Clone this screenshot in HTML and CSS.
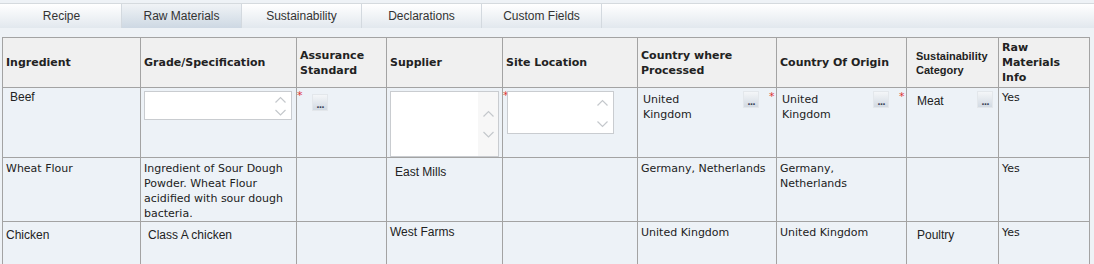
FILE: index.html
```html
<!DOCTYPE html>
<html lang="en">
<head>
  <meta charset="UTF-8">
  <title>Raw Materials</title>
  <link rel="stylesheet" href="styles.css">
</head>
<body>

<div class="tabbar">
  <a class="tab">Recipe</a>
  <a class="tab active">Raw Materials</a>
  <a class="tab">Sustainability</a>
  <a class="tab">Declarations</a>
  <a class="tab">Custom Fields</a>
</div>

<table class="grid">
  <colgroup>
    <col style="width:138px">
    <col style="width:156px">
    <col style="width:90px">
    <col style="width:116px">
    <col style="width:135px">
    <col style="width:139px">
    <col style="width:130px">
    <col style="width:92px">
    <col style="width:91px">
  </colgroup>
  <thead>
    <tr class="head">
      <th>Ingredient</th>
      <th>Grade/Specification</th>
      <th>Assurance Standard</th>
      <th>Supplier</th>
      <th>Site Location</th>
      <th>Country where Processed</th>
      <th>Country Of Origin</th>
      <th class="small">Sustainability Category</th>
      <th>Raw Materials Info</th>
    </tr>
  </thead>
  <tbody>
    <tr class="r1">
      <td><span class="arial pad">Beef</span></td>
      <td>
        <div class="box grade">
          <span class="chev">
            <svg width="11" height="24" viewBox="0 0 11 24"><path d="M0.5 8.5 L5.5 3.5 L10.5 8.5 M0.5 16 L5.5 21 L10.5 16" fill="none" stroke="#c4c8cc" stroke-width="1.2"/></svg>
          </span>
        </div>
      </td>
      <td class="flush">
        <div class="line"><span class="req">*</span><span class="pick first">...</span></div>
      </td>
      <td>
        <div class="box supplier">
          <span class="chev">
            <svg width="11" height="34" viewBox="0 0 11 34"><path d="M0.5 9.5 L5.5 4.5 L10.5 9.5 M0.5 25 L5.5 30 L10.5 25" fill="none" stroke="#c4c8cc" stroke-width="1.2"/></svg>
          </span>
        </div>
      </td>
      <td class="flush">
        <div class="line"><span class="req">*</span>
          <div class="box site">
            <span class="chev">
              <svg width="11" height="30" viewBox="0 0 11 30"><path d="M0.5 7.5 L5.5 2.5 L10.5 7.5 M0.5 23.5 L5.5 28.5 L10.5 23.5" fill="none" stroke="#c4c8cc" stroke-width="1.2"/></svg>
            </span>
          </div>
        </div>
      </td>
      <td>
        <div class="line">
          <span class="val">United Kingdom</span>
          <span class="pick">...</span>
          <span class="req end">*</span>
        </div>
      </td>
      <td>
        <div class="line">
          <span class="val">United Kingdom</span>
          <span class="pick">...</span>
          <span class="req end">*</span>
        </div>
      </td>
      <td>
        <div class="line">
          <span class="arial meat">Meat</span>
          <span class="pick">...</span>
        </div>
      </td>
      <td>Yes</td>
    </tr>
    <tr class="r2">
      <td>Wheat Flour</td>
      <td>Ingredient of Sour Dough Powder. Wheat Flour acidified with sour dough bacteria.</td>
      <td></td>
      <td><span class="arial mills">East Mills</span></td>
      <td></td>
      <td>Germany, Netherlands</td>
      <td>Germany, Netherlands</td>
      <td></td>
      <td>Yes</td>
    </tr>
    <tr class="r3">
      <td><span class="arial drop">Chicken</span></td>
      <td><span class="arial drop pad">Class A chicken</span></td>
      <td></td>
      <td><span class="arial">West Farms</span></td>
      <td></td>
      <td>United Kingdom</td>
      <td>United Kingdom</td>
      <td><span class="arial drop poultry">Poultry</span></td>
      <td>Yes</td>
    </tr>
  </tbody>
</table>

</body>
</html>
```

FILE: styles.css
```css
body {
  margin: 0;
  background: #eef2f6;
  font-family: "DejaVu Sans", Verdana, sans-serif;
  font-size: 11px;
  color: #222;
}
.tabbar {
  display: flex;
  margin-top: 3px;
  height: 24px;
  padding-left: 2px;
  border-top: 1px solid #d5dade;
  background: linear-gradient(#ffffff, #e2e8ee);
}
.tab {
  width: 120px;
  box-sizing: border-box;
  border-right: 1px solid #d3d9df;
  display: flex;
  align-items: center;
  justify-content: center;
  font-family: "Liberation Sans", Arial, sans-serif;
  font-size: 12px;
  color: #333;
}
.tab.active {
  background: linear-gradient(#f0f3f6, #cdd8e3);
}
.grid {
  margin: 9px 0 0 2px;
  border-collapse: collapse;
  table-layout: fixed;
  width: 1088px;
}
.grid th,
.grid td {
  border: 1px solid #a3a3a3;
  padding: 0 3px;
  text-align: left;
  line-height: 15px;
}
.grid th {
  background: #f0f0f0;
  font-weight: bold;
  font-size: 11px;
  vertical-align: middle;
}
.grid th.small {
  font-family: "Liberation Sans", Arial, sans-serif;
  padding-left: 9px;
  line-height: 14px;
}
.grid td {
  background: #edf2f7;
  vertical-align: top;
  padding-top: 3px;
}
.head { height: 50px; }
.r1 { height: 70px; }
.r2 { height: 63px; }
.r3 { height: 44px; }
.r1 td { padding-top: 2px; }
.grid td.flush { padding-left: 0; }
.arial {
  font-family: "Liberation Sans", Arial, sans-serif;
  font-size: 12px;
}
.pad { padding-left: 4px; }
.poultry { padding-left: 7px; }
.mills { display: inline-block; padding: 4px 0 0 5px; }
.drop { display: inline-block; padding-top: 3px; }
.meat { display: inline-block; padding: 4px 0 0 7px; width: 50px; }
.line {
  display: flex;
  align-items: flex-start;
}
.val {
  width: 84px;
  padding: 2px 0 0 2px;
}
.req {
  color: #d33;
  font-size: 11px;
  line-height: 12px;
  width: 4px;
  flex: none;
}
.req.end {
  margin-left: 8px;
  margin-top: 1px;
}
.pick {
  margin: 1px 2px 0 auto;
  width: 16px;
  height: 17px;
  box-sizing: border-box;
  border: 1px solid #e3e7eb;
  background: linear-gradient(#f4f6f8, #d2dae3);
  color: #3c4658;
  font-size: 9px;
  font-weight: bold;
  line-height: 21px;
  text-align: center;
  letter-spacing: -1px;
  overflow: hidden;
  flex: none;
}
.pick.first {
  margin: 4px 0 0 11px;
}
.box {
  box-sizing: border-box;
  background: #fff;
  border: 1px solid #c9ccd0;
  display: flex;
  justify-content: flex-end;
  align-items: center;
}
.box.grade {
  width: 148px;
  height: 29px;
  margin-top: 1px;
}
.box.supplier {
  width: 109px;
  height: 66px;
  margin-top: 1px;
}
.box.site {
  width: 107px;
  height: 43px;
  margin: 1px 0 0 0;
}
.chev {
  display: flex;
  align-items: center;
  padding-right: 5px;
}
.supplier .chev {
  align-self: stretch;
  background: #f7f7f7;
  padding: 0 4px 0 5px;
}
```
